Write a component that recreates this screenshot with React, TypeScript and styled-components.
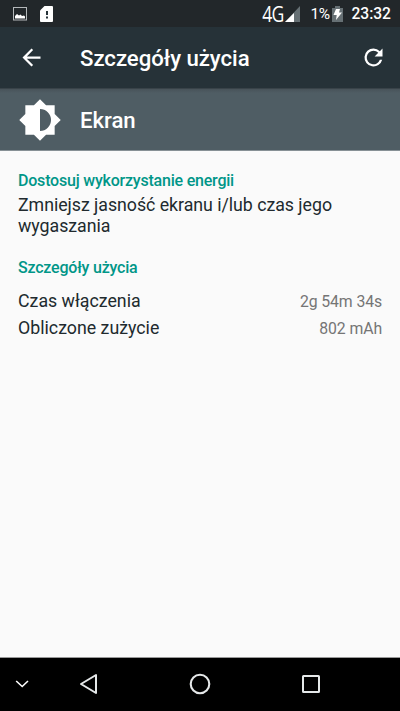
import React from 'react';
import styled, { createGlobalStyle } from 'styled-components';

const GlobalStyle = createGlobalStyle`
  * { box-sizing: border-box; }
  body { margin: 0; background: #fafafa; font-family: Roboto, sans-serif; }
  svg { display: block; flex: none; }
`;

const Screen = styled.div`
  width: 400px;
  height: 711px;
  display: flex;
  flex-direction: column;
  overflow: hidden;
  background: #fafafa;
`;

const StatusBar = styled.header`
  height: 27px;
  flex: none;
  display: flex;
  align-items: center;
  padding: 0 9px 0 13px;
  background: #22272a;
  color: #fff;
`;

const Notifications = styled.div`
  display: flex;
  align-items: center;
  gap: 13px;
`;

const Indicators = styled.div`
  display: flex;
  align-items: center;
  margin-left: auto;
`;

const Network = styled.span`
  width: 23px;
  font: 400 21px/26px "Open Sans", sans-serif;
  letter-spacing: -1.2px;
  white-space: nowrap;
  transform: translateX(1.3px) scaleX(0.84);
  transform-origin: left center;
`;

const Percent = styled.span`
  width: 20px;
  margin: 1px 2px 0 10px;
  font-size: 15.5px;
  line-height: 26px;
  letter-spacing: -0.4px;
`;

const Clock = styled.span`
  margin: 1px 0 0 8px;
  font-size: 15.6px;
  font-weight: 500;
  line-height: 26px;
`;

const Toolbar = styled.div`
  height: 62px;
  flex: none;
  display: flex;
  align-items: center;
  padding: 0 13px 0 18px;
  background: #263238;
  border-bottom: 1px solid #394349;
  color: #fff;
`;

const Title = styled.h1<{ $indent: number }>`
  margin: 0 auto 0 ${({ $indent }) => $indent}px;
  color: #fff;
  font-size: 22.2px;
  font-weight: 500;
  line-height: 30px;
  letter-spacing: -0.04px;
  white-space: nowrap;
`;

const AppHeader = styled.div`
  height: 62px;
  flex: none;
  display: flex;
  align-items: center;
  padding-left: 18px;
  background: linear-gradient(#485359, #4f5d64 4px);
  border-bottom: 1px solid #879095;
`;

const Content = styled.main`
  flex: 1;
  padding: 20px 18px 0;
  border-bottom: 1px solid #999;
  color: #263238;
`;

const SectionTitle = styled.h2`
  margin: 0;
  color: #009688;
  font-size: 16px;
  font-weight: 500;
  line-height: 20px;
  letter-spacing: -0.21px;
`;

const Hint = styled.p`
  margin: 4px 0 21px;
  font-size: 17.78px;
  line-height: 21px;
  letter-spacing: -0.035px;
  color: #212a2e;
`;

const Details = styled.dl`
  margin: 13px 0 0;
`;

const Row = styled.div`
  display: flex;
  justify-content: space-between;
  align-items: baseline;
  height: 26.5px;
  line-height: 21px;
`;

const Label = styled.dt`
  font-size: 17.78px;
  color: #212a2e;
`;

const Value = styled.dd`
  margin: 0;
  font-size: 15.8px;
  letter-spacing: -0.1px;
  color: #757575;
`;

const NavBar = styled.nav`
  height: 53px;
  flex: none;
  display: grid;
  grid-template-columns: 44px 89px 134px 88px;
  align-items: center;
  justify-items: center;
  padding-bottom: 1px;
  background: #000;
`;

export default function App() {
  return (
    <>
      <GlobalStyle />
      <Screen>
        <StatusBar>
          <Notifications>
            <svg width="14" height="14" viewBox="0 0 14 14">
              <rect x="0.5" y="0.5" width="13" height="12.5" fill="none" stroke="#b4b8ba" />
              <path d="M2 11.5V9l2-2 2 1.5 1.5-1L9 9l2-.5 1 1v2z" fill="#fff" />
            </svg>
            <svg width="14" height="16" viewBox="0 0 14 16">
              <path d="M4.5 0H12q1 0 1 1v14q0 1-1 1H1q-1 0-1-1V4.5z" fill="#fff" />
              <path d="M6 5h2v4H6zm0 5.5h2v2H6z" fill="#263238" />
            </svg>
          </Notifications>
          <Indicators>
            <Network>4G</Network>
            <svg width="16" height="16" viewBox="0 0 16 16">
              <path d="M1 16L16 0v16z" fill="#667074" />
              <path d="M1 16L10 7v9z" fill="#fff" />
            </svg>
            <Percent>1%</Percent>
            <svg width="11" height="16" viewBox="0 0 11 16">
              <path d="M3 0h5v2h3v14H0V2h3z" fill="#667074" />
              <path d="M4 3h4L7 6.5h3L4 14l.7-5H1.5z" fill="#fff" />
            </svg>
            <Clock>23:32</Clock>
          </Indicators>
        </StatusBar>
        <Toolbar>
          <svg width="27" height="27" viewBox="0 0 24 24">
            <path d="M20 11H7.83l5.59-5.59L12 4l-8 8 8 8 1.41-1.41L7.83 13H20z" fill="#fff" />
          </svg>
          <Title $indent={35}>Szczegóły użycia</Title>
          <svg width="27" height="27" viewBox="0 0 24 24">
            <path d="M17.65 6.35A7.96 7.96 0 0 0 12 4a8 8 0 1 0 7.73 10h-2.08A6 6 0 1 1 12 6c1.66 0 3.14.69 4.22 1.78L13 11h7V4z" fill="#fff" />
          </svg>
        </Toolbar>
        <AppHeader>
          <svg width="44" height="44" viewBox="0 0 24 24">
            <path d="M20 15.31L23.31 12 20 8.69V4h-4.69L12 .69 8.69 4H4v4.69L.69 12 4 15.31V20h4.69L12 23.31 15.31 20H20zM12 18V6a6 6 0 0 1 0 12z" fill="#fff" />
          </svg>
          <Title $indent={18}>Ekran</Title>
        </AppHeader>
        <Content>
          <SectionTitle>Dostosuj wykorzystanie energii</SectionTitle>
          <Hint>Zmniejsz jasność ekranu i/lub czas jego wygaszania</Hint>
          <SectionTitle>Szczegóły użycia</SectionTitle>
          <Details>
            <Row>
              <Label>Czas włączenia</Label>
              <Value>2g 54m 34s</Value>
            </Row>
            <Row>
              <Label>Obliczone zużycie</Label>
              <Value>802 mAh</Value>
            </Row>
          </Details>
        </Content>
        <NavBar>
          <svg width="14" height="8" viewBox="0 0 14 8">
            <path d="M1.2 1L7.2 6.5 13 1" fill="none" stroke="#fff" strokeWidth="1.6" />
          </svg>
          <svg width="19" height="22" viewBox="0 0 19 22">
            <path d="M17 2v18L2 11z" fill="none" stroke="#e5e8e9" strokeWidth="2" strokeLinejoin="round" />
          </svg>
          <svg width="22" height="22" viewBox="0 0 22 22">
            <circle cx="11" cy="11" r="9.3" fill="none" stroke="#e5e8e9" strokeWidth="2.1" />
          </svg>
          <svg width="20" height="20" viewBox="0 0 20 20">
            <rect x="2" y="2" width="16" height="16" rx="0.5" fill="none" stroke="#e5e8e9" strokeWidth="2" />
          </svg>
        </NavBar>
      </Screen>
    </>
  );
}
